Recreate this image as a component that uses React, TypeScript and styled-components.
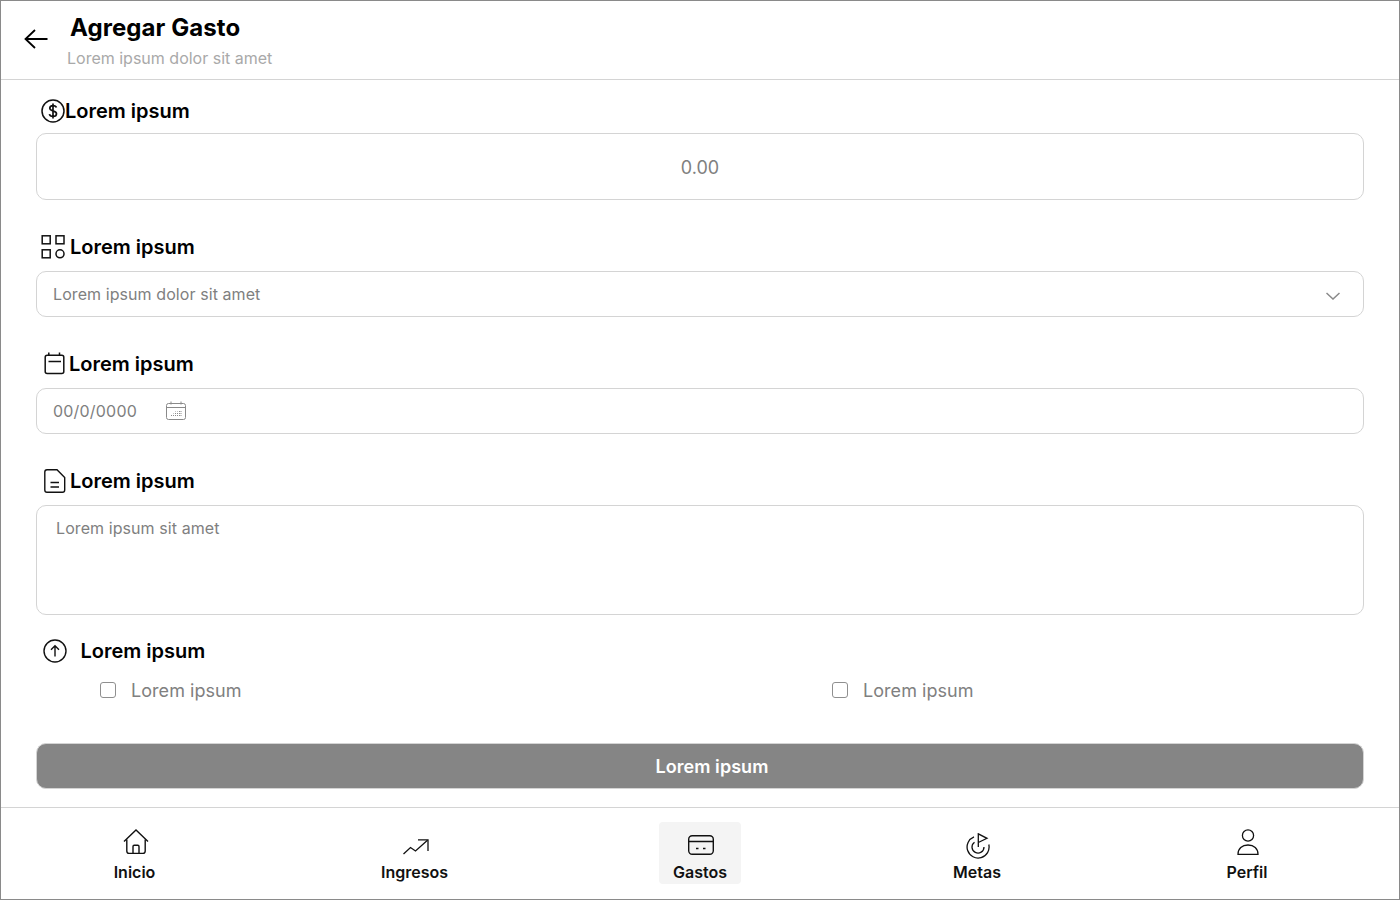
import React from "react";
import styled, { createGlobalStyle } from "styled-components";

const GlobalStyle = createGlobalStyle`
  html, body {
    margin: 0;
    padding: 0;
    background: #fff;
  }
  * {
    box-sizing: border-box;
  }
  body {
    font-family: Inter, "Liberation Sans", sans-serif;
    color: #000;
  }
`;

const ArrowBack = () => (
  <svg width="24" height="24" viewBox="0 0 24 24" fill="none" stroke="#000" strokeWidth="1.8">
    <path d="M23.5 12H1.5M11 3L1.5 12L11 21" />
  </svg>
);

const DollarIcon = () => (
  <svg width="24" height="24" viewBox="0 0 24 24" fill="none" stroke="#111" strokeWidth="1.5">
    <circle cx="12" cy="12" r="11" />
    <path d="M15.4 8.6C15 7.3 13.7 6.6 12 6.6C10 6.6 8.8 7.7 8.8 9.3C8.8 12.6 15.5 11 15.5 14.7C15.5 16.3 14 17.4 12 17.4C10 17.4 8.7 16.5 8.4 15.1M12 4.6V19.4" strokeWidth="1.7" />
  </svg>
);

const GridIcon = () => (
  <svg width="24" height="24" viewBox="0 0 24 24" fill="none" stroke="#111" strokeWidth="1.5">
    <rect x="1.2" y="0.8" width="8" height="8" />
    <rect x="15" y="0.8" width="8" height="8" />
    <rect x="1.2" y="14.8" width="8" height="8" />
    <circle cx="19" cy="18.8" r="4" />
  </svg>
);

const CalendarIcon = () => (
  <svg width="22" height="24" viewBox="0 0 22 24" fill="none" stroke="#111" strokeWidth="1.5">
    <rect x="1.2" y="3.2" width="18.6" height="18.3" rx="2" />
    <path d="M4.8 0.5V3.5M15.5 0.5V3.5M4.5 9.5H17" />
  </svg>
);

const SmallCalendarIcon = () => (
  <svg width="20" height="20" viewBox="0 0 20 20" fill="none" stroke="#8a8a8a" strokeWidth="1">
    <rect x="0.5" y="2.5" width="19" height="16" rx="2" />
    <path d="M0.5 6.5H19.5M5 0.5V3.5M15 0.5V3.5" />
    <path d="M5.5 15V13.5M7.5 15V12.5M9.5 15V10.5M11.5 15V10.5M13.5 15V10M15 15V10" strokeDasharray="1 1" />
  </svg>
);

const FileIcon = () => (
  <svg width="22" height="24" viewBox="0 0 22 24" fill="none" stroke="#111" strokeWidth="1.4">
    <path d="M3 0.8H13L20.7 8.5V21C20.7 22.3 19.8 23.2 18.5 23.2H3C1.7 23.2 0.8 22.3 0.8 21V3C0.8 1.7 1.7 0.8 3 0.8Z" />
    <path d="M6.5 13.5H15M6.5 18H15" />
  </svg>
);

const UpCircleIcon = () => (
  <svg width="24" height="24" viewBox="0 0 24 24" fill="none" stroke="#111" strokeWidth="1.4">
    <circle cx="12" cy="12" r="11" />
    <path d="M12 17.5V7M8 10.8L12 6.8L16 10.8" />
  </svg>
);

const ChevronIcon = () => (
  <svg width="14" height="8" viewBox="0 0 14 8" fill="none" stroke="#8a8a8a" strokeWidth="1.5">
    <path d="M0.5 1L7 7L13.5 1" />
  </svg>
);

const HomeIcon = () => (
  <svg width="26" height="26" viewBox="0 0 26 26" fill="none" stroke="#111" strokeWidth="1.4">
    <path d="M1 12.5L13 1L25 12.5" />
    <path d="M3.8 10.5V22C3.8 23.5 4.6 24.4 6 24.4H20C21.4 24.4 22.2 23.5 22.2 22V10.5" />
    <path d="M10 24.4V17.5C10 16.8 10.5 16.2 11.2 16.2H14.8C15.5 16.2 16 16.8 16 17.5V24.4" />
  </svg>
);

const TrendIcon = () => (
  <svg width="26" height="16" viewBox="0 0 26 16" fill="none" stroke="#111" strokeWidth="1.3">
    <path d="M0.5 15L7.5 8.5L12.5 12L24.5 1.2" />
    <path d="M15 0.8H25V12" />
  </svg>
);

const CardIcon = () => (
  <svg width="26" height="20" viewBox="0 0 26 20" fill="none" stroke="#111" strokeWidth="1.4">
    <rect x="0.7" y="0.7" width="24.6" height="18.6" rx="3.5" />
    <path d="M0.7 6.5H25.3M8 13.5H10.5M15 13.5H17.5" />
  </svg>
);

const GoalIcon = () => (
  <svg width="24" height="26" viewBox="0 0 24 26" fill="none" stroke="#111" strokeWidth="1.3">
    <path d="M8 3.8A11 11 0 1 0 22.8 11.5" />
    <path d="M8.5 9.2A6 6 0 1 0 18 14" />
    <path d="M12.3 14V0.8L21 5.3L12.3 9.5" />
  </svg>
);

const PersonIcon = () => (
  <svg width="22" height="26" viewBox="0 0 22 26" fill="none" stroke="#111" strokeWidth="1.3">
    <circle cx="11" cy="6.5" r="5.6" />
    <path d="M1 25.3C1 19.6 5 16 11 16C17 16 21 19.6 21 25.3H1Z" />
  </svg>
);

const Frame = styled.div`
  width: 1400px;
  height: 900px;
  border: 1px solid #8a8a8a;
  display: flex;
  flex-direction: column;
  background: #fff;
  overflow: hidden;
`;

const Header = styled.header`
  height: 79px;
  flex-shrink: 0;
  border-bottom: 1px solid #d4d4d4;
  display: flex;
  align-items: flex-start;
  padding: 26px 0 0 23px;
`;

const BackButton = styled.div`
  width: 24px;
  height: 24px;
`;

const HeaderText = styled.div`
  margin-left: 19px;
  margin-top: -14px;
`;

const Title = styled.h1`
  margin: 0 0 0 3px;
  font-size: 24px;
  line-height: 29px;
  font-weight: 700;
  letter-spacing: 0.08px;
  color: #000;
`;

const Subtitle = styled.p`
  margin: 7px 0 0;
  font-size: 16px;
  line-height: 19px;
  font-weight: 400;
  color: #a9a9a9;
`;

const Form = styled.main`
  flex: 1;
  padding: 19px 35px 0;
`;

const Label = styled.div<{ $top?: number; $gap?: number; $pad?: number }>`
  display: flex;
  align-items: center;
  height: 24px;
  margin-top: ${(p) => p.$top ?? 0}px;
  padding-left: ${(p) => p.$pad ?? 5}px;
  gap: ${(p) => p.$gap ?? 0}px;
  font-size: 20px;
  font-weight: 600;
  color: #000;
`;

const AmountBox = styled.div`
  height: 67px;
  margin-top: 10px;
  padding-top: 2px;
  border: 1px solid #d4d4d4;
  border-radius: 10px;
  display: flex;
  align-items: center;
  justify-content: center;
  font-size: 18px;
  color: #808080;
`;

const InputBox = styled.div`
  height: 46px;
  margin-top: 12px;
  border: 1px solid #d4d4d4;
  border-radius: 10px;
  display: flex;
  align-items: center;
  padding: 0 23px 0 16px;
  font-size: 16px;
  letter-spacing: 0.08px;
  color: #808080;
`;

const SelectBox = styled(InputBox)`
  justify-content: space-between;
`;

const ChevronSlot = styled.span`
  display: flex;
  margin-top: 4px;
`;

const DateText = styled.span`
  width: 113px;
  letter-spacing: 0.2px;
`;

const TextBox = styled.div`
  height: 110px;
  margin-top: 12px;
  border: 1px solid #d4d4d4;
  border-radius: 10px;
  padding: 13px 19px;
  font-size: 16px;
  line-height: 19px;
  letter-spacing: 0.08px;
  color: #808080;
`;

const CheckRow = styled.div`
  display: grid;
  grid-template-columns: 732px 1fr;
  padding-left: 64px;
  margin-top: 15px;
`;

const CheckItem = styled.label`
  display: flex;
  align-items: center;
  gap: 15px;
  height: 24px;
  font-size: 18px;
  letter-spacing: 0.05px;
  color: #808080;
`;

const CheckBox = styled.span`
  width: 16px;
  height: 16px;
  border: 1.5px solid #8f8f8f;
  border-radius: 3px;
  background: #fff;
`;

const Submit = styled.button`
  display: block;
  width: 100%;
  height: 46px;
  margin-top: 41px;
  padding: 0 0 0 24px;
  border: 1px solid #d4d4d4;
  border-radius: 10px;
  background: #858585;
  color: #fff;
  font-family: inherit;
  font-size: 18px;
  font-weight: 600;
  letter-spacing: 0.05px;
`;

const Nav = styled.nav`
  height: 92px;
  flex-shrink: 0;
  border-top: 1px solid #d4d4d4;
  display: flex;
  align-items: flex-start;
  padding-top: 14px;
`;

const NavItem = styled.div<{ $active?: boolean; $left: number; $width: number }>`
  display: flex;
  flex-direction: column;
  align-items: center;
  justify-content: flex-end;
  width: ${(p) => p.$width}px;
  height: 62px;
  margin-left: ${(p) => p.$left}px;
  padding-bottom: 2px;
  border-radius: 4px;
  background: ${(p) => (p.$active ? "#f4f4f4" : "transparent")};
  font-size: 16px;
  line-height: 20px;
  font-weight: 600;
  color: #111;
  flex-shrink: 0;
`;

const NavIcon = styled.span<{ $drop?: number }>`
  display: flex;
  justify-content: center;
  margin-left: 2px;
  margin-bottom: ${(p) => p.$drop ?? 7}px;
`;

export default function App() {
  return (
    <>
      <GlobalStyle />
      <Frame>
        <Header>
          <BackButton>
            <ArrowBack />
          </BackButton>
          <HeaderText>
            <Title>Agregar Gasto</Title>
            <Subtitle>Lorem ipsum dolor sit amet</Subtitle>
          </HeaderText>
        </Header>

        <Form>
          <Label>
            <DollarIcon />
            Lorem ipsum
          </Label>
          <AmountBox>0.00</AmountBox>

          <Label $top={35} $gap={5}>
            <GridIcon />
            Lorem ipsum
          </Label>
          <SelectBox>
            Lorem ipsum dolor sit amet
            <ChevronSlot>
              <ChevronIcon />
            </ChevronSlot>
          </SelectBox>

          <Label $top={35} $gap={3} $pad={8}>
            <CalendarIcon />
            Lorem ipsum
          </Label>
          <InputBox>
            <DateText>00/0/0000</DateText>
            <SmallCalendarIcon />
          </InputBox>

          <Label $top={35} $gap={4} $pad={8}>
            <FileIcon />
            Lorem ipsum
          </Label>
          <TextBox>Lorem ipsum sit amet</TextBox>

          <Label $top={24} $gap={13.5} $pad={7}>
            <UpCircleIcon />
            Lorem ipsum
          </Label>
          <CheckRow>
            <CheckItem>
              <CheckBox />
              Lorem ipsum
            </CheckItem>
            <CheckItem>
              <CheckBox />
              Lorem ipsum
            </CheckItem>
          </CheckRow>

          <Submit>Lorem ipsum</Submit>
        </Form>

        <Nav>
          <NavItem $left={93.5} $width={80}>
            <NavIcon>
              <HomeIcon />
            </NavIcon>
            Inicio
          </NavItem>
          <NavItem $left={190} $width={100}>
            <NavIcon>
              <TrendIcon />
            </NavIcon>
            Ingresos
          </NavItem>
          <NavItem $active $left={194.5} $width={82}>
            <NavIcon>
              <CardIcon />
            </NavIcon>
            Gastos
          </NavItem>
          <NavItem $left={196} $width={80}>
            <NavIcon $drop={3}>
              <GoalIcon />
            </NavIcon>
            Metas
          </NavItem>
          <NavItem $left={190} $width={80}>
            <NavIcon>
              <PersonIcon />
            </NavIcon>
            Perfil
          </NavItem>
        </Nav>
      </Frame>
    </>
  );
}
